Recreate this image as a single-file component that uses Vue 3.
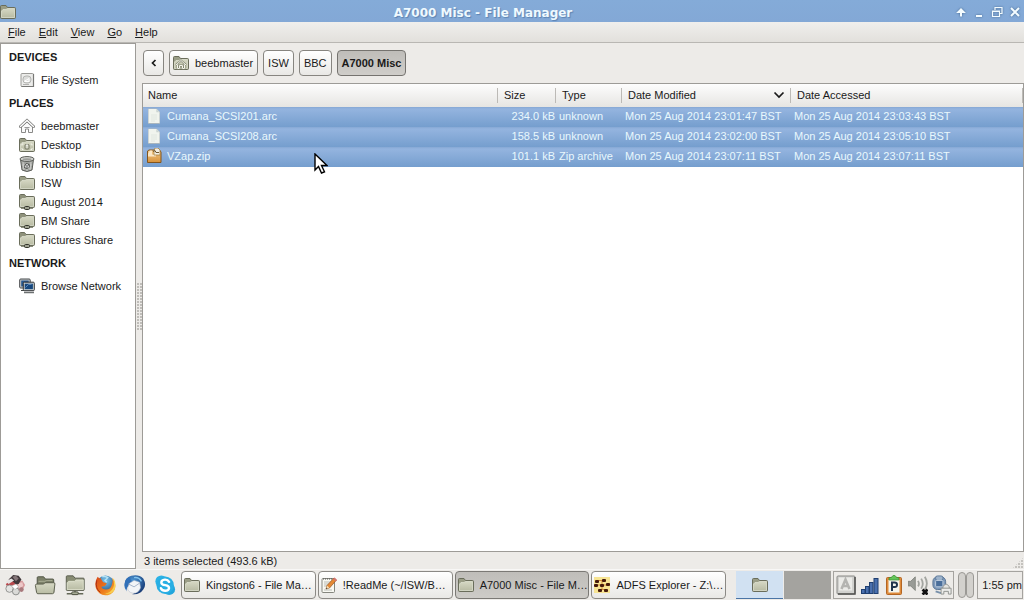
<script setup>
const menus = ['File', 'Edit', 'View', 'Go', 'Help']

const sections = [
  { title: 'DEVICES', items: [{ label: 'File System', icon: 'drive' }] },
  {
    title: 'PLACES',
    items: [
      { label: 'beebmaster', icon: 'home' },
      { label: 'Desktop', icon: 'desktop' },
      { label: 'Rubbish Bin', icon: 'bin' },
      { label: 'ISW', icon: 'folder' },
      { label: 'August 2014', icon: 'share' },
      { label: 'BM Share', icon: 'share' },
      { label: 'Pictures Share', icon: 'share' },
    ],
  },
  { title: 'NETWORK', items: [{ label: 'Browse Network', icon: 'network' }] },
]

const crumbs = [
  { label: 'beebmaster', icon: 'folderhome' },
  { label: 'ISW' },
  { label: 'BBC' },
  { label: 'A7000 Misc', active: true },
]

const files = [
  { name: 'Cumana_SCSI201.arc', icon: 'file', size: '234.0 kB', type: 'unknown', modified: 'Mon 25 Aug 2014 23:01:47 BST', accessed: 'Mon 25 Aug 2014 23:03:43 BST' },
  { name: 'Cumana_SCSI208.arc', icon: 'file', size: '158.5 kB', type: 'unknown', modified: 'Mon 25 Aug 2014 23:02:00 BST', accessed: 'Mon 25 Aug 2014 23:05:10 BST' },
  { name: 'VZap.zip', icon: 'zip', size: '101.1 kB', type: 'Zip archive', modified: 'Mon 25 Aug 2014 23:07:11 BST', accessed: 'Mon 25 Aug 2014 23:07:11 BST' },
]

const launchers = [
  { icon: 'menu', label: 'Applications' },
  { icon: 'openfolder', label: 'Files' },
  { icon: 'netfolder', label: 'Shares' },
  { icon: 'firefox', label: 'Web' },
  { icon: 'thunderbird', label: 'Mail' },
  { icon: 'skype', label: 'Calls' },
]

const tasks = [
  { label: 'Kingston6 - File Ma…', icon: 'folder' },
  { label: '!ReadMe (~/ISW/B…', icon: 'note' },
  { label: 'A7000 Misc - File M…', icon: 'folder', active: true },
  { label: 'ADFS Explorer - Z:\\…', icon: 'adfs' },
]

const tray = ['keyboard', 'signal', 'clipboard', 'volume', 'updates']
</script>

<template>
  <div class="screen">
    <svg class="defs" aria-hidden="true">
      <defs>
        <linearGradient id="gFolder" x1="0" y1="0" x2="0" y2="1">
          <stop offset="0" stop-color="#d6d8c4" /><stop offset="1" stop-color="#b9bca4" />
        </linearGradient>
        <linearGradient id="gZip" x1="0" y1="0" x2="0" y2="1">
          <stop offset="0" stop-color="#f0c88a" /><stop offset="1" stop-color="#d8923a" />
        </linearGradient>
        <linearGradient id="gFox" x1="0" y1="0" x2="1" y2="1">
          <stop offset="0" stop-color="#d8481a" /><stop offset="0.6" stop-color="#ee7d1c" /><stop offset="1" stop-color="#f6c23c" />
        </linearGradient>
        <radialGradient id="gGlobe" cx="0.5" cy="0.3" r="0.8">
          <stop offset="0" stop-color="#7cc8ee" /><stop offset="1" stop-color="#17427e" />
        </radialGradient>
        <radialGradient id="gBird" cx="0.4" cy="0.3" r="0.8">
          <stop offset="0" stop-color="#4f9ad8" /><stop offset="1" stop-color="#0f2c66" />
        </radialGradient>
      </defs>
      <symbol id="folder" viewBox="0 0 16 16">
        <path d="M.5 13.5v-11q0-1 1-1h4.500l1.500 2h7q1 0 1 1v9q0 1-1 1h-13q-1 0-1-1z" fill="#9a9d86" stroke="#6a6d5b" />
        <path d="M1.500 13.500V7L3 5.500h3L7.500 4.500H14.500v9z" fill="url(#gFolder)" stroke="#e3e5d6" stroke-width=".7" />
      </symbol>
      <symbol id="folderhome" viewBox="0 0 16 16">
        <use href="#folder" />
        <path d="M3 10l5-4.500 5 4.500M4.500 9.500v4h2v-3h3v3h2v-4" fill="none" stroke="#7c806c" stroke-width="1.800" />
        <path d="M3 10l5-4.500 5 4.500M4.500 9.500v4h2v-3h3v3h2v-4" fill="none" stroke="#f4f5ec" />
      </symbol>
      <symbol id="desktop" viewBox="0 0 16 16">
        <use href="#folder" />
        <path d="M3 7h1.500M3 7v1.500M13 7h-1.500M13 7v1.500M3 12.500h1.500M3 12.500V11M13 12.500h-1.500M13 12.500V11" fill="none" stroke="#f2f3ea" />
        <rect x="6" y="7.500" width="4" height="4.500" rx="1" fill="#d5d7c8" stroke="#70735f" />
        <path d="M7 8h2" stroke="#fff" />
      </symbol>
      <symbol id="share" viewBox="0 0 16 16">
        <path d="M.5 12.500v-11q0-1 1-1h4l1.500 2h7.500q1 0 1 1v9q0 1-1 1h-13q-1 0-1-1z" fill="#8f927c" stroke="#6a6d5b" />
        <path d="M1.500 12.500V6L3 4.500h3l1.500-1H14.500v9z" fill="url(#gFolder)" stroke="#e3e5d6" stroke-width=".7" />
        <path d="M2 14.500h12" stroke="#8b8e7e" />
        <rect x="5.500" y="12.500" width="5" height="3" rx="1" fill="#9da090" stroke="#33352c" />
      </symbol>
      <symbol id="drive" viewBox="0 0 16 16">
        <rect x="2" y="1.500" width="12.500" height="13" rx="1" fill="#ececea" stroke="#9a9a97" />
        <path d="M2.500 14.500H14.500V2" fill="none" stroke="#777775" stroke-width="1.200" />
        <rect x="4" y="4" width="8" height="7" rx="3" fill="#dcdddb" stroke="#b3b4b1" />
        <path d="M5 9.500l5-3v3H6" fill="none" stroke="#fff" /><path d="M4 12.500h6" stroke="#b2b2b0" />
      </symbol>
      <symbol id="home" viewBox="0 0 16 16">
        <path d="M2.500 8.500V14.500h4V11h3v3.500H13.500V8.500L8 4z" fill="#fafafa" stroke="#8a8a88" />
        <path d="M1.500 8.500L8 2.500l6.500 6" fill="none" stroke="#7b7b79" stroke-width="3" stroke-linecap="round" />
        <path d="M1.500 8.500L8 2.500l6.500 6" fill="none" stroke="#fff" stroke-width="1.400" stroke-linecap="round" />
        <path d="M5.500 9.500h5" stroke="#999" />
      </symbol>
      <symbol id="bin" viewBox="0 0 16 16">
        <path d="M1.500 3.500L3 14q5 3 10 0l1.500-10.500z" fill="#a2a4a0" stroke="#5c5e59" />
        <path d="M4 6l1 8M12 6l-1 8M8 7v8M3 9h10M3.500 12h9" stroke="#d0d2ce" stroke-width=".8" />
        <path d="M5.500 9l2-2 3 1 .5 3-3 2-3-1z" fill="#50524e" /><path d="M6 11l2-3 2 3z" fill="none" stroke="#ddd" />
        <ellipse cx="8" cy="3" rx="7" ry="2.400" fill="#d4d5d2" stroke="#565853" />
        <ellipse cx="8" cy="3.200" rx="4.500" ry="1" fill="#9b9d99" />
      </symbol>
      <symbol id="network" viewBox="0 0 16 16">
        <rect x=".7" y="1" width="10.500" height="9" rx="1" fill="#c9cdce" stroke="#45484a" />
        <rect x="2.200" y="2.500" width="7.500" height="6" fill="#25558c" />
        <path d="M2 12.500h4" stroke="#454848" />
        <rect x="4.300" y="4.200" width="11" height="8.500" rx="1" fill="#ccd2d4" stroke="#303336" />
        <rect x="5.700" y="5.700" width="8.200" height="5.500" fill="#16477e" /><path d="M6.500 9.500l3-3h3" stroke="#5a87b8" fill="none" />
        <path d="M5 14.500h10" stroke="#6c7071" stroke-width="1.500" />
      </symbol>
      <symbol id="file" viewBox="0 0 16 16">
        <path d="M2.500 1h8l3 3v11.500h-11z" fill="#f0f4ee" stroke="#a9b5bd" />
        <path d="M2.500 1h8l3 3v11h-11z" fill="#f1f4ee" /><path d="M10.300 1v3.200h3.200" fill="#cbd4d2" />
        <path d="M5 7h6M5 9h6M5 11h6M5 13h4" stroke="#dee4dc" stroke-width=".8" />
      </symbol>
      <symbol id="zip" viewBox="0 0 16 16">
        <path d="M1.500 3L3 2h10.500l1.500 2v10.500H1.500z" fill="url(#gZip)" stroke="#83551c" />
        <path d="M2 5.500l2-3h2v4h4v2H2z" fill="#fbe6c3" /><path d="M9 0h3l2 2v5H8V3z" fill="#f3efe4" stroke="#a5813f" stroke-width=".8" />
        <path d="M7 3.500l2-1 1 2h3" fill="none" stroke="#6f5730" />
      </symbol>
      <symbol id="note" viewBox="0 0 16 16">
        <rect x="1" y="1.500" width="12.500" height="14" rx="1" fill="#f8f8f2" stroke="#85867e" />
        <path d="M2 2h11" stroke="#555" stroke-dasharray="1 1" /><path d="M3 5h7M3 7h5M3 9h4M3 13h8" stroke="#b9bcb6" />
        <path d="M5 12l1-3.500L13 1l2.500 2L8.500 11z" fill="#e68a35" stroke="#935322" stroke-width=".7" />
        <path d="M5 12l1-3.500 2.500 2.500z" fill="#f3dfb8" /><path d="M5 12l.5-1.500 1 1z" fill="#222" /><path d="M12 2l1.500-1.500L16 3l-1.500 1.500z" fill="#d4736e" />
      </symbol>
      <symbol id="adfs" viewBox="0 0 16 16">
        <rect width="16" height="16" fill="#f7e493" />
        <path d="M3 3.500h5v9M3 8h10M5 12.500h6" stroke="#d08a35" fill="none" />
        <g fill="#45190b"><rect x="1" y="3" width="4" height="3" rx="1" /><rect x="8" y="2" width="4" height="3" rx="1" /><rect y="7" width="4" height="3" rx="1" /><rect x="6" y="7" width="4" height="3" rx="1" /><rect x="12" y="6" width="4" height="3" rx="1" /><rect x="4" y="12" width="4" height="3" rx="1" /><rect x="10" y="12" width="4" height="3" rx="1" /></g>
      </symbol>
      <symbol id="menu" viewBox="0 0 24 24">
        <path d="M13 9l7-2 3 5-3 6-7-1z" fill="#d79b9d" /><path d="M15 10l5-1 1 4-5 3z" fill="#edc8c8" />
        <path d="M5 6l5-5 6 1 3 4-3 5-7 1z" fill="#41373a" /><path d="M9 3l4-1 3 3-3 3z" fill="#857679" />
        <path d="M2 11l6-4 4 3v5l-7 2z" fill="#b9484d" /><path d="M2 8l6-3 3 2-6 4z" fill="#e6e4e4" />
        <circle cx="6" cy="16" r="4" fill="#e4e4e2" stroke="#8f8f8d" /><circle cx="13" cy="19" r="3.800" fill="#dadad7" stroke="#868886" />
        <path d="M8 13l5-2 3 3-4 3z" fill="#fff" stroke="#aaa" stroke-width=".6" /><circle cx="19" cy="17" r="2.500" fill="#a8797c" />
      </symbol>
      <symbol id="openfolder" viewBox="0 0 24 24">
        <path d="M3.500 20V4q0-1 1-1h6l2 2.500h8q1 0 1 1V20z" fill="#7c8069" stroke="#4c5040" />
        <path d="M5 8h7l2-1h6" stroke="#b2b69d" />
        <path d="M1.500 12.500q0-1.500 1.500-1.500h7.500l1.500-1.500h9.500q1.500 0 1.300 1.500L21.700 20q-.2 1.500-1.500 1.500h-16Q3 21.500 2.800 20z" fill="url(#gFolder)" stroke="#565a48" />
      </symbol>
      <symbol id="netfolder" viewBox="0 0 24 24">
        <path d="M2.500 17V3q0-1 1-1H10l2 2.500h9q1 0 1 1V17q0 1-1 1H3.500q-1 0-1-1z" fill="#888c73" stroke="#55594a" />
        <path d="M3.500 17V9.500L5 8h6.500L13 6.500h8V17z" fill="url(#gFolder)" stroke="#dfe2cf" />
        <path d="M3 21.500h18M12 18v2" stroke="#646857" stroke-width="1.500" /><rect x="8.500" y="19.500" width="7" height="3" rx="1" fill="#a9ad98" stroke="#454839" />
      </symbol>
      <symbol id="firefox" viewBox="0 0 24 24">
        <circle cx="12.500" cy="11" r="9.500" fill="url(#gGlobe)" />
        <path d="M4 3Q2 6 1.500 10 1 17 6 21t12 1q5-3 5.300-9Q23 8 20 4q.7 4-.3 7-1 6-6.700 6-4 0-5-3l4-1 2-3-4-1-2-3-1-2-1 1z" fill="url(#gFox)" />
        <path d="M20 4q3 6 1 11-3 6-9 6 6 2 10-3 3-6 0-12z" fill="#f9cf50" />
        <path d="M3 7q-2 9 4 13" stroke="#a92d12" fill="none" /><path d="M9 3q3-1 6 1l-3 3 2 2" fill="none" stroke="#b4e3f6" stroke-width="1.500" />
      </symbol>
      <symbol id="thunderbird" viewBox="0 0 24 24">
        <path d="M1 9Q2 4 8 2q8-2 13 3 4 7 0 12-4 6-12 5 7-3 8-8L6 9z" fill="url(#gBird)" />
        <path d="M1 9q1-5 6-6-1 3 2 5l-4 5q-3 3-2 6Q-1 14 1 9z" fill="#3170b8" />
        <path d="M6 10l5-3 6 2 1 6q-2 6-8 6-6-1-6-6z" fill="#f2f4f7" stroke="#b5bdca" stroke-width=".6" />
        <path d="M5 11l6 3 6-4" stroke="#a1b0c7" fill="none" /><path d="M11 4q5-1 8 4" stroke="#82c4ef" stroke-width="1.500" fill="none" />
      </symbol>
      <symbol id="skype" viewBox="0 0 24 24">
        <circle cx="8" cy="8" r="6.500" fill="#2bb2e6" /><circle cx="16.500" cy="16.500" r="6.500" fill="#22a6dc" /><circle cx="12.200" cy="12.200" r="9.500" fill="#29aee3" />
        <path d="M16.500 8.500Q15 6 11.800 6.200 8 6.500 8 9.200q0 2.300 4.200 3 4.400.8 4.200 3.200-.3 2.800-4.200 2.800-3.500 0-4.700-2.700" fill="none" stroke="#fff" stroke-width="2.600" stroke-linecap="round" />
      </symbol>
      <symbol id="keyboard" viewBox="0 0 20 20">
        <rect x="1" y="1" width="18" height="18" rx="1" fill="#d1d1ce" stroke="#8a8a87" /><path d="M19 2v17H2" stroke="#50504e" stroke-width="1.500" fill="none" />
        <rect x="3" y="2.500" width="13" height="13" fill="#ebebe8" /><path d="M5.500 14L9.500 4.500 13.500 14M7 11h5" fill="none" stroke="#b4b4b1" stroke-width="2.600" />
      </symbol>
      <symbol id="signal" viewBox="0 0 20 20">
        <g fill="#4a70ae" stroke="#1f3f70"><rect x="1.500" y="14.500" width="3.500" height="4" /><rect x="5.500" y="11.500" width="3.500" height="7" /><rect x="9.500" y="7.500" width="3.500" height="11" /><rect x="14" y="3.500" width="4" height="15" /></g>
      </symbol>
      <symbol id="clipboard" viewBox="0 0 20 20">
        <rect x="2.500" y="2.500" width="15" height="17" rx="1" fill="#df8b3b" stroke="#b36624" /><rect x="4.500" y="5" width="11" height="12.500" fill="#f5f5ed" />
        <path d="M5 5V3l3-1 1-1.500h2L12 2l3 1v2z" fill="#63c55a" stroke="#399034" stroke-width=".7" />
        <path d="M8 16V7.500h2.500q2.500 0 2.500 2.300T10.500 12H8" fill="none" stroke="#20344c" stroke-width="2" />
      </symbol>
      <symbol id="volume" viewBox="0 0 22 22">
        <path d="M0 7h3l5-5v15l-5-5H0z" fill="#999b96" stroke="#83867f" />
        <path d="M11 6.500q2 3.500 0 6M14.500 4q3.500 5.500 0 11M18.500 2q4.500 7.500 0 14" fill="none" stroke="#a3a5a0" stroke-width="2" />
        <path d="M16 16l5.500 5.500M21.500 16L16 21.500" stroke="#111" stroke-width="3" />
      </symbol>
      <symbol id="updates" viewBox="0 0 22 22">
        <rect x="1" y="2" width="14" height="14" rx="5" fill="#7f9abb" stroke="#54708f" /><rect x="4" y="1" width="8" height="5" rx="2" fill="#9eb3cb" stroke="#5c7798" />
        <rect x="4" y="6" width="8" height="7" rx="1" fill="#4a6e9b" stroke="#c9d6e4" /><path d="M4 18l6 2" stroke="#7890aa" stroke-width="2" />
        <path d="M12 15v-2q3.500-6 7 0v2" fill="#e4e4e2" stroke="#8f918e" /><path d="M10 14.500h11v6.500h-3v-3h-5v3h-3z" fill="#ececea" stroke="#8b8d89" />
      </symbol>
    </svg>

    <header class="titlebar">
      <svg class="i16 appicon"><use href="#folder" /></svg>
      <h1>A7000 Misc - File Manager</h1>
      <div class="winbtns">
        <button aria-label="Shade"><svg viewBox="0 0 12 12"><path d="M6 10.500V4M3.500 6L6 3.500 8.500 6z" class="glyph" /></svg></button>
        <button aria-label="Minimise"><svg viewBox="0 0 12 12"><path d="M3 10h6" class="glyph" /></svg></button>
        <button aria-label="Restore"><svg viewBox="0 0 12 12"><path d="M4 4V1.500h7v6H8.500M1.500 5h7v5.500h-7zM1.500 5.500h7" class="glyph thin" /></svg></button>
        <button aria-label="Close"><svg viewBox="0 0 12 12"><path d="M2 2l8 8M10 2l-8 8" class="glyph" /></svg></button>
      </div>
    </header>

    <nav class="menubar">
      <button v-for="m in menus" :key="m"><u>{{ m[0] }}</u>{{ m.slice(1) }}</button>
    </nav>

    <div class="body">
      <aside class="sidebar">
        <section v-for="s in sections" :key="s.title">
          <h2>{{ s.title }}</h2>
          <a v-for="i in s.items" :key="i.label" href="#"><svg class="i16"><use :href="'#' + i.icon" /></svg>{{ i.label }}</a>
        </section>
      </aside>
      <div class="splitter"><span class="grip"></span></div>
      <main class="main">
        <div class="pathbar">
          <button class="back" aria-label="Back"><svg viewBox="0 0 8 8"><path d="M5.500 1L2.500 4l3 3" /></svg></button>
          <button v-for="c in crumbs" :key="c.label" :class="{ active: c.active, home: c.icon }">
            <svg v-if="c.icon" class="i16"><use :href="'#' + c.icon" /></svg>{{ c.label }}
          </button>
        </div>
        <div class="list">
          <table>
            <colgroup><col class="c-name" /><col class="c-size" /><col class="c-type" /><col class="c-mod" /><col /></colgroup>
            <thead>
              <tr>
                <th>Name</th><th>Size</th><th>Type</th>
                <th><span class="sorted">Date Modified<svg viewBox="0 0 12 8"><path d="M1.500 1.500L6 6l4.500-4.500" /></svg></span></th>
                <th>Date Accessed</th>
              </tr>
            </thead>
            <tbody>
              <tr v-for="f in files" :key="f.name">
                <td><span class="fname"><svg class="i16"><use :href="'#' + f.icon" /></svg>{{ f.name }}</span></td>
                <td class="num">{{ f.size }}</td><td>{{ f.type }}</td><td>{{ f.modified }}</td><td>{{ f.accessed }}</td>
              </tr>
            </tbody>
          </table>
        </div>
        <footer class="status"><span>3 items selected (493.6 kB)</span><span class="resize"></span></footer>
      </main>
    </div>

    <div class="panel">
      <div class="launchers">
        <button v-for="l in launchers" :key="l.icon" :aria-label="l.label"><svg><use :href="'#' + l.icon" /></svg></button>
      </div>
      <div class="tasks">
        <button v-for="t in tasks" :key="t.label" :class="{ active: t.active }"><svg class="i16"><use :href="'#' + t.icon" /></svg><span>{{ t.label }}</span></button>
      </div>
      <div class="pager">
        <button class="current" aria-label="Workspace 1"><svg class="i16"><use href="#folder" /></svg></button>
        <button aria-label="Workspace 2"></button>
      </div>
      <div class="tray"><svg v-for="t in tray" :key="t"><use :href="'#' + t" /></svg></div>
      <div class="handles"><i></i><i></i></div>
      <time class="clock">1:55 pm</time>
    </div>

    <svg class="cursor" viewBox="0 0 14 21"><path d="M1 1v16l3.500-3.500 3 6.500 3-1.200-3-6.300H13z" fill="#fff" stroke="#000" stroke-width="1.400" /></svg>
  </div>
</template>

<style>
body { margin: 0; }
</style>

<style scoped>
.screen {
  position: relative;
  display: flex;
  flex-direction: column;
  min-height: 100vh;
  background: #edebe8;
  color: #1a1a1a;
  font: 11px/14px "Liberation Sans", Arial, sans-serif;
}
* { box-sizing: border-box; }
button { font: inherit; color: inherit; border: 0; background: none; padding: 0; margin: 0; }
svg { display: block; flex: none; }
.defs { position: absolute; width: 0; height: 0; }
.i16 { width: 16px; height: 16px; }

.titlebar {
  display: flex;
  align-items: center;
  height: 22px;
  background: linear-gradient(#84abd8, #83a8d6);
}
.appicon { margin-top: 2px; }
.titlebar h1 {
  flex: 1;
  margin: 0;
  padding: 3px 5px 0 0;
  text-align: center;
  font: bold 12px/16px "DejaVu Sans", sans-serif;
  color: #eef9ff;
  text-shadow: 1px 1px 1px #5c83b2;
}
.winbtns { display: flex; gap: 6px; padding: 2px 3px 0 0; }
.winbtns svg { width: 12px; height: 12px; filter: drop-shadow(0 0 1px #456890); }
.glyph { fill: none; stroke: #f4fcff; stroke-width: 2; }
.glyph.thin { stroke-width: 1.2; }

.menubar {
  display: flex;
  gap: 13px;
  height: 21px;
  padding: 0 8px;
  border-bottom: 1px solid #b9b7b3;
  background: linear-gradient(#f0efed, #e2e0dc);
}

.body { flex: 1; display: flex; }
.sidebar { width: 136px; flex: none; background: #fff; border: 1px solid #9d9b97; }
.sidebar h2 { margin: 0; padding-left: 8px; font-size: 11px; line-height: 27px; }
.sidebar a {
  display: flex;
  align-items: center;
  gap: 6px;
  height: 19px;
  padding: 0 0 2px 18px;
  color: inherit;
  text-decoration: none;
}
.splitter { width: 6px; flex: none; display: flex; align-items: center; justify-content: center; }
.grip { width: 5px; height: 47px; background: radial-gradient(circle at 1px 1px, #bfbdb9 1px, transparent 1px) 0 0 / 3px 3px; }
.main { flex: 1; min-width: 0; display: flex; flex-direction: column; }
.pathbar { display: flex; gap: 5px; padding: 7px 1px; }
.pathbar button {
  display: flex;
  align-items: center;
  justify-content: center;
  gap: 6px;
  height: 26px;
  padding: 0 4px 1px;
  border: 1px solid #878580;
  border-radius: 4px;
  background: linear-gradient(#fff, #e9e8e5);
}
.pathbar .back { width: 21px; }
.back svg { width: 8px; height: 8px; }
.back path, .sorted path { fill: none; stroke: #1a1a1a; stroke-width: 1.7; }
.pathbar .home { padding: 0 4px 1px 3px; }
.pathbar .active { background: linear-gradient(#bfbdb9, #cfcdc9); border-color: #75736f; font-weight: bold; }

.list { flex: 1; background: #fff; border: 1px solid #9d9b97; }
table { width: 100%; table-layout: fixed; border-collapse: collapse; }
.c-name { width: 355px; }
.c-size { width: 58px; }
.c-type { width: 66px; }
.c-mod { width: 169px; }
thead tr { height: 23px; background: linear-gradient(#fdfdfd, #e6e5e2); }
th {
  padding: 0 6px 2px;
  text-align: left;
  font-weight: normal;
  background: linear-gradient(#bcbab6, #bcbab6) right 4px / 1px 15px no-repeat;
}
th:first-child { padding-left: 5px; }
.sorted { display: flex; align-items: center; justify-content: space-between; }
.sorted svg { width: 12px; height: 8px; }
tbody tr { height: 20px; background: linear-gradient(#86a8d4, #94b4df 2px, #759ece); color: #e9f8fd; }
td { padding: 0 3px 2px; white-space: nowrap; }
td.num { padding: 0 1px 2px; text-align: right; }
.fname { display: flex; align-items: center; gap: 5px; }

.status { display: flex; justify-content: space-between; align-items: flex-end; height: 17px; padding-left: 2px; }
.status span:first-child { align-self: center; }
.resize {
  width: 12px;
  height: 12px;
  background: radial-gradient(circle at 1px 1px, #c4c2be 1px, transparent 1px) 0 0 / 3px 3px;
  clip-path: polygon(100% 0, 100% 100%, 0 100%);
}

.panel { display: flex; align-items: center; height: 31px; padding-right: 1px; border-top: 1px solid #f8f7f6; }
.launchers { display: flex; width: 181px; flex: none; }
.launchers button { width: 30px; display: flex; justify-content: center; }
.launchers svg { width: 22px; height: 22px; }
.tasks { display: flex; flex: 1; min-width: 0; gap: 2px; padding-right: 10px; }
.tasks button {
  display: flex;
  align-items: center;
  flex: 1 1 0;
  min-width: 0;
  gap: 6px;
  height: 28px;
  padding: 0 2px;
  border: 1px solid #8b8985;
  border-radius: 4px;
  background: linear-gradient(#fff, #e9e8e5);
  white-space: nowrap;
}
.tasks .active { background: linear-gradient(#bfbdb9, #cdcbc7); border-color: #7b7975; }
.pager { display: flex; gap: 1px; margin-right: 2px; }
.pager button { width: 47px; height: 28px; display: flex; align-items: center; justify-content: center; background: #a4a39f; }
.pager .current { background: #d1e1f2; border-bottom: 1px solid #4a74a5; }
.tray { display: flex; align-items: center; gap: 4px; height: 28px; padding: 0 1px 0 2px; border: 1px solid #a5a39f; }
.tray svg { width: 20px; height: 20px; }
.handles { display: flex; width: 23px; justify-content: center; }
.handles i { width: 8px; height: 26px; border: 1px solid #9b9995; border-radius: 4px; background: #d3d1cd; }
.clock { height: 28px; padding: 0 0 0 4px; border: 1px solid #a5a39f; line-height: 26px; white-space: nowrap; }

.cursor { position: absolute; left: 314px; top: 153px; width: 14px; height: 21px; }
</style>
